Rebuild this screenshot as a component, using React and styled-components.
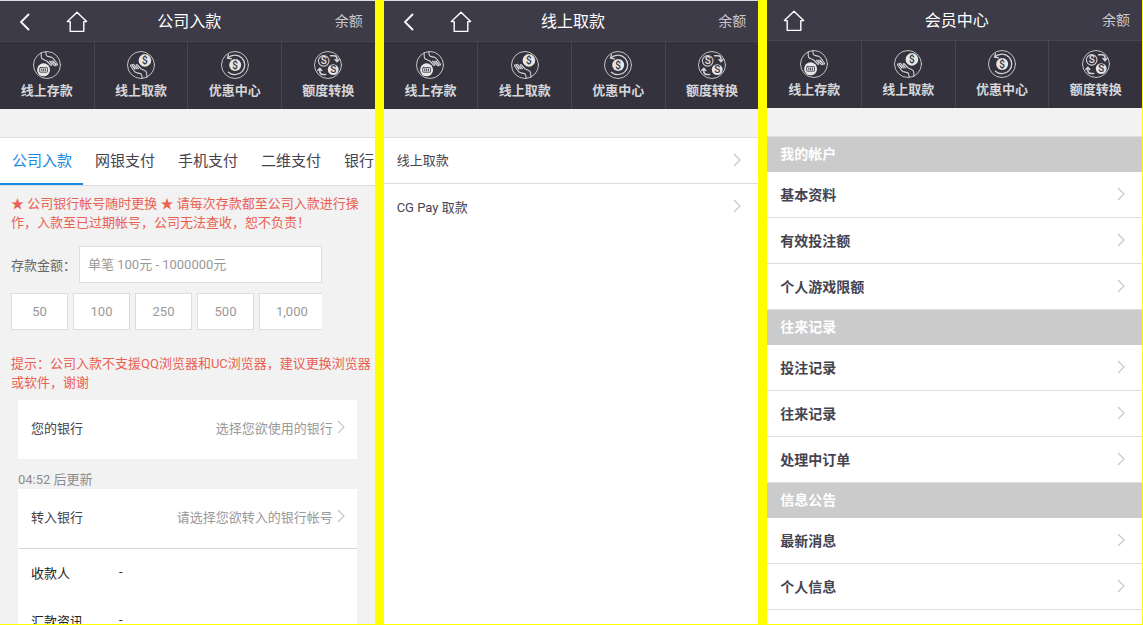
import React from "react";
import styled, { createGlobalStyle } from "styled-components";

const NAV_ITEMS = [
  { label: "线上存款", Icon: DepositIcon },
  { label: "线上取款", Icon: WithdrawIcon },
  { label: "优惠中心", Icon: PromoIcon },
  { label: "额度转换", Icon: TransferIcon },
];

const TABS = ["公司入款", "网银支付", "手机支付", "二维支付", "银行"];
const AMOUNTS = ["50", "100", "250", "500", "1,000"];

const MEMBER_MENU = [
  { title: "我的帐户", items: ["基本资料", "有效投注额", "个人游戏限额"] },
  { title: "往来记录", items: ["投注记录", "往来记录", "处理中订单"] },
  { title: "信息公告", items: ["最新消息", "个人信息"] },
];

function Chevron() {
  return (
    <ChevronSvg viewBox="0 0 8 14" aria-hidden="true">
      <path d="M1 1l6 6-6 6" />
    </ChevronSvg>
  );
}

function Hand() {
  return (
    <g strokeWidth="1.1">
      <path d="M8.2 1.8v3.8c0 1.6.8 2.4 2.2 3L13.8 10l3.8 4c.9.8 1.8-.1 1.1-1l-2.2-2.8" />
      <path d="M12.8.8l.4 3c.1.9.7 1.4 1.5 1.6l4.1 1c.9.3 1.5.8 2 1.6l3.6 5c.6.9-.5 1.7-1.2.9l-3.2-3.4" />
      <path d="M18 10.2l3.2 4.2c.8.9 1.8-.1 1.2-1.1l-2.4-3.4" />
    </g>
  );
}

function DepositIcon() {
  return (
    <NavSvg viewBox="0 0 28 28" aria-hidden="true">
      <circle cx="14" cy="14" r="13.5" />
      <Hand />
      <Coin cx="10.6" cy="18.8" r="6.5" />
      <rect x="6.7" y="16.6" width="7.8" height="4.6" rx=".6" stroke="#33323d" strokeWidth=".8" />
      <path d="M8.8 18v1.8M10.6 18v1.8M12.4 18v1.8" stroke="#33323d" strokeWidth=".9" />
    </NavSvg>
  );
}

function WithdrawIcon() {
  return (
    <NavSvg viewBox="0 0 28 28" aria-hidden="true">
      <circle cx="14" cy="14" r="13.5" />
      <g transform="rotate(180 14 14)">
        <Hand />
      </g>
      <Coin cx="17.9" cy="9.4" r="6.3" />
      <Sign x="17.9" y="13">$</Sign>
    </NavSvg>
  );
}

function PromoIcon() {
  return (
    <NavSvg viewBox="0 0 28 28" aria-hidden="true">
      <circle cx="14" cy="14" r="13.5" />
      <path d="M7.2 6.8a9.8 9.8 0 1 1 .2 14.4" strokeWidth="1.3" />
      <path d="M7.6 3.8L6.4 7.2l4 .6" strokeWidth="1.3" />
      <Coin cx="14.2" cy="14" r="6" />
      <Sign x="14.2" y="17.6">$</Sign>
    </NavSvg>
  );
}

function TransferIcon() {
  return (
    <NavSvg viewBox="0 0 28 28" aria-hidden="true">
      <circle cx="14" cy="14" r="13.5" />
      <circle cx="9.7" cy="9.8" r="5.3" strokeWidth="1.1" />
      <Sign x="9.7" y="13.4" $light>S</Sign>
      <Coin cx="19.2" cy="18.6" r="5.4" />
      <Sign x="19.2" y="22.2">S</Sign>
      <path d="M16.6 4.8h3.2c2 0 3.2 1.2 3.2 3.2v2M21 8.6l2 2.2 2-2.2" strokeWidth="1.5" />
      <path d="M11.6 23.4H9c-2 0-3.2-1.2-3.2-3.2v-2.4M3.8 19.4l2-2.2 2 2.2" strokeWidth="1.5" />
    </NavSvg>
  );
}

function TopBar({ title, back }) {
  return (
    <Bar>
      <BarLeft>
        {back && (
          <BarLink href="#back" aria-label="返回">
            <BackSvg viewBox="0 0 12 18">
              <path d="M10 1L2 9l8 8" />
            </BackSvg>
          </BarLink>
        )}
        <BarLink href="#home" aria-label="首页">
          <HomeSvg viewBox="0 0 22 22">
            <path d="M4.2 10.6H1.4L11 1.2l9.6 9.4h-2.8v9.8H4.2z" />
          </HomeSvg>
        </BarLink>
      </BarLeft>
      <Title>{title}</Title>
      <Balance href="#balance">余额</Balance>
    </Bar>
  );
}

function Screen({ title, back, topLine, white, children }) {
  return (
    <Phone $topLine={topLine}>
      <TopBar title={title} back={back} />
      <Nav>
        {NAV_ITEMS.map(({ label, Icon }) => (
          <NavLink key={label} href="#nav">
            <Icon />
            {label}
          </NavLink>
        ))}
      </Nav>
      <Content $white={white}>{children}</Content>
    </Phone>
  );
}

function DepositScreen() {
  return (
    <Screen title="公司入款" back topLine>
      <Tabs>
        {TABS.map((tab, i) => (
          <Tab key={tab} type="button" $active={i === 0}>
            {tab}
          </Tab>
        ))}
      </Tabs>
      <Notice>
        ★ 公司银行帐号随时更换 ★ 请每次存款都至公司入款进行操
        <br />
        作，入款至已过期帐号，公司无法查收，恕不负责！
      </Notice>
      <Form>
        <Field>
          <label htmlFor="amount">存款金额：</label>
          <AmountInput id="amount" placeholder="单笔 100元 - 1000000元" />
        </Field>
        <Amounts>
          {AMOUNTS.map((amount) => (
            <AmountButton key={amount} type="button">
              {amount}
            </AmountButton>
          ))}
        </Amounts>
      </Form>
      <Notice>
        提示：公司入款不支援QQ浏览器和UC浏览器，建议更换浏览器
        <br />
        或软件，谢谢
      </Notice>
      <Cards>
        <BankButton type="button">
          您的银行
          <BankHint>
            选择您欲使用的银行
            <Chevron />
          </BankHint>
        </BankButton>
        <Countdown>04:52 后更新</Countdown>
        <BankButton type="button">
          转入银行
          <BankHint>
            请选择您欲转入的银行帐号
            <Chevron />
          </BankHint>
        </BankButton>
        <Details>
          <dt>收款人</dt>
          <dd>-</dd>
          <dt>汇款资讯</dt>
          <dd>-</dd>
        </Details>
      </Cards>
    </Screen>
  );
}

function WithdrawScreen() {
  return (
    <Screen title="线上取款" back topLine white>
      <MenuList>
        <MenuLink href="#withdraw">
          线上取款
          <Chevron />
        </MenuLink>
        <MenuLink href="#cgpay">
          CG Pay 取款
          <Chevron />
        </MenuLink>
      </MenuList>
    </Screen>
  );
}

function MemberScreen() {
  return (
    <Screen title="会员中心" white>
      <MenuList>
        {MEMBER_MENU.map(({ title, items }) => (
          <section key={title}>
            <GroupTitle>{title}</GroupTitle>
            {items.map((item) => (
              <MemberLink key={item} href="#member">
                {item}
                <Chevron />
              </MemberLink>
            ))}
          </section>
        ))}
      </MenuList>
    </Screen>
  );
}

function App() {
  return (
    <>
      <GlobalStyle />
      <Board>
        <DepositScreen />
        <WithdrawScreen />
        <MemberScreen />
      </Board>
    </>
  );
}

export default App;

const GlobalStyle = createGlobalStyle`
  * {
    box-sizing: border-box;
  }

  body {
    margin: 0;
    background: #ffff00;
    color: #44434f;
    font-family: Roboto, "Noto Sans CJK SC", sans-serif;
    font-size: 13px;
  }

  a {
    color: inherit;
    text-decoration: none;
  }

  button,
  input {
    font: inherit;
    color: inherit;
  }
`;

const Board = styled.main`
  display: grid;
  grid-template-columns: repeat(3, minmax(0, 1fr));
  gap: 9px;
  height: 100vh;
  padding: 0 1px 1px 0;
`;

const Phone = styled.section`
  display: flex;
  flex-direction: column;
  overflow: hidden;
  border-top: ${({ $topLine }) => ($topLine ? "1px solid #d9dddf" : "none")};
`;

const Bar = styled.header`
  display: grid;
  grid-template-columns: 1fr auto 1fr;
  align-items: center;
  flex-shrink: 0;
  height: 41px;
  padding: 0 12px 2px 16px;
  background: #3c3b47;
  border-bottom: 1px solid #45444f;
`;

const BarLeft = styled.div`
  display: flex;
  align-items: center;
  gap: 35px;
  padding-top: 4px;
`;

const BarLink = styled.a`
  display: flex;
`;

const BackSvg = styled.svg`
  width: 12px;
  height: 18px;
  margin-left: 3px;
  fill: none;
  stroke: #fff;
  stroke-width: 1.8;
`;

const HomeSvg = styled.svg`
  width: 22px;
  height: 22px;
  fill: none;
  stroke: #fff;
  stroke-width: 1.4;
  stroke-linejoin: round;
`;

const Title = styled.h1`
  margin: 0;
  color: #fff;
  font-size: 16px;
  font-weight: 400;
`;

const Balance = styled.a`
  color: #c9c8cc;
  font-size: 14px;
  text-align: right;
`;

const Nav = styled.nav`
  display: grid;
  grid-template-columns: repeat(4, 1fr);
  flex-shrink: 0;
  height: 67px;
  background: #33323d;
`;

const NavLink = styled.a`
  display: flex;
  flex-direction: column;
  align-items: center;
  gap: 2px;
  padding-top: 9px;
  color: #d6d6d8;
  font-weight: 700;
  line-height: 20px;

  & + & {
    border-left: 1px solid #474650;
  }
`;

const NavSvg = styled.svg`
  width: 28px;
  height: 28px;
  fill: none;
  stroke: #d2d2d5;
  stroke-width: 0.9;
  stroke-linecap: round;
  stroke-linejoin: round;
`;

const Coin = styled.circle`
  fill: #e6e6e6;
  stroke: none;
`;

const Sign = styled.text`
  fill: ${({ $light }) => ($light ? "#e6e6e6" : "#33323d")};
  stroke: none;
  font-size: 10px;
  font-weight: 500;
  text-anchor: middle;
`;

const Content = styled.div`
  flex: 1;
  min-height: 0;
  overflow: hidden;
  background: ${({ $white }) => ($white ? "#fff" : "#f2f2f2")};
  border-top: 28px solid #f2f2f2;
`;

const Tabs = styled.div`
  display: flex;
  overflow: hidden;
  height: 49px;
  background: #fff;
  border-top: 1px solid #dddddf;
  border-bottom: 1px solid #dddddf;
`;

const Tab = styled.button`
  flex-shrink: 0;
  padding: 0 11px 2px 12px;
  background: none;
  border: none;
  border-bottom: 2px solid ${({ $active }) => ($active ? "#1a8be0" : "transparent")};
  color: ${({ $active }) => ($active ? "#1a8be0" : "#44434f")};
  font-size: 15px;
`;

const Notice = styled.p`
  margin: 8px 0 0 11px;
  color: #ea6153;
  line-height: 19px;
  white-space: nowrap;
`;

const Form = styled.form`
  width: 86%;
  padding: 14px 0 16px 11px;
`;

const Field = styled.div`
  display: flex;
  align-items: center;
  color: #666;
`;

const AmountInput = styled.input`
  flex: 1;
  min-width: 0;
  height: 37px;
  margin-left: 3px;
  padding: 0 8px;
  border: 1px solid #ddd;
  background: #fff;

  &::placeholder {
    color: #999;
  }
`;

const Amounts = styled.div`
  display: flex;
  gap: 5px;
  overflow: hidden;
  margin-top: 10px;
`;

const AmountButton = styled.button`
  flex-shrink: 0;
  min-width: 57px;
  height: 37px;
  padding: 0 16px;
  background: #fff;
  border: 1px solid #ddd;
  color: #999;
`;

const Cards = styled.div`
  margin: 8px 18px 0;
`;

const BankButton = styled.button`
  display: flex;
  align-items: center;
  justify-content: space-between;
  width: 100%;
  height: 59px;
  padding: 0 12px 5px 13px;
  background: #fff;
  border: none;
`;

const BankHint = styled.span`
  display: flex;
  align-items: center;
  gap: 4px;
  color: #999;
`;

const Countdown = styled.p`
  margin: 0;
  padding-top: 11px;
  color: #8c8c8c;
  line-height: 19px;
`;

const Details = styled.dl`
  display: grid;
  grid-template-columns: 88px 1fr;
  grid-auto-rows: 48px;
  margin: 0;
  padding: 1px 13px;
  background: #fff;
  border-top: 1px solid #d8d8d8;
  color: #222;
  line-height: 48px;

  dd {
    margin: 0;
    line-height: 44px;
  }
`;

const MenuList = styled.div`
  border-top: 1px solid #dddddf;
`;

const MenuLink = styled.a`
  display: flex;
  align-items: center;
  justify-content: space-between;
  height: 46px;
  padding: 0 17px 2px 13px;

  &:not(:last-child) {
    border-bottom: 1px solid #dddddf;
  }
`;

const MemberLink = styled(MenuLink)`
  border-bottom: 1px solid #dddddf;
  font-size: 14px;
  font-weight: 700;
`;

const GroupTitle = styled.h2`
  margin: 0;
  padding: 0 13px;
  background: #cbcbcb;
  color: #fff;
  font-size: 14px;
  font-weight: 700;
  line-height: 35px;
`;

const ChevronSvg = styled.svg`
  flex-shrink: 0;
  width: 8px;
  height: 14px;
  fill: none;
  stroke: #c8c8c8;
  stroke-width: 1.2;
`;
